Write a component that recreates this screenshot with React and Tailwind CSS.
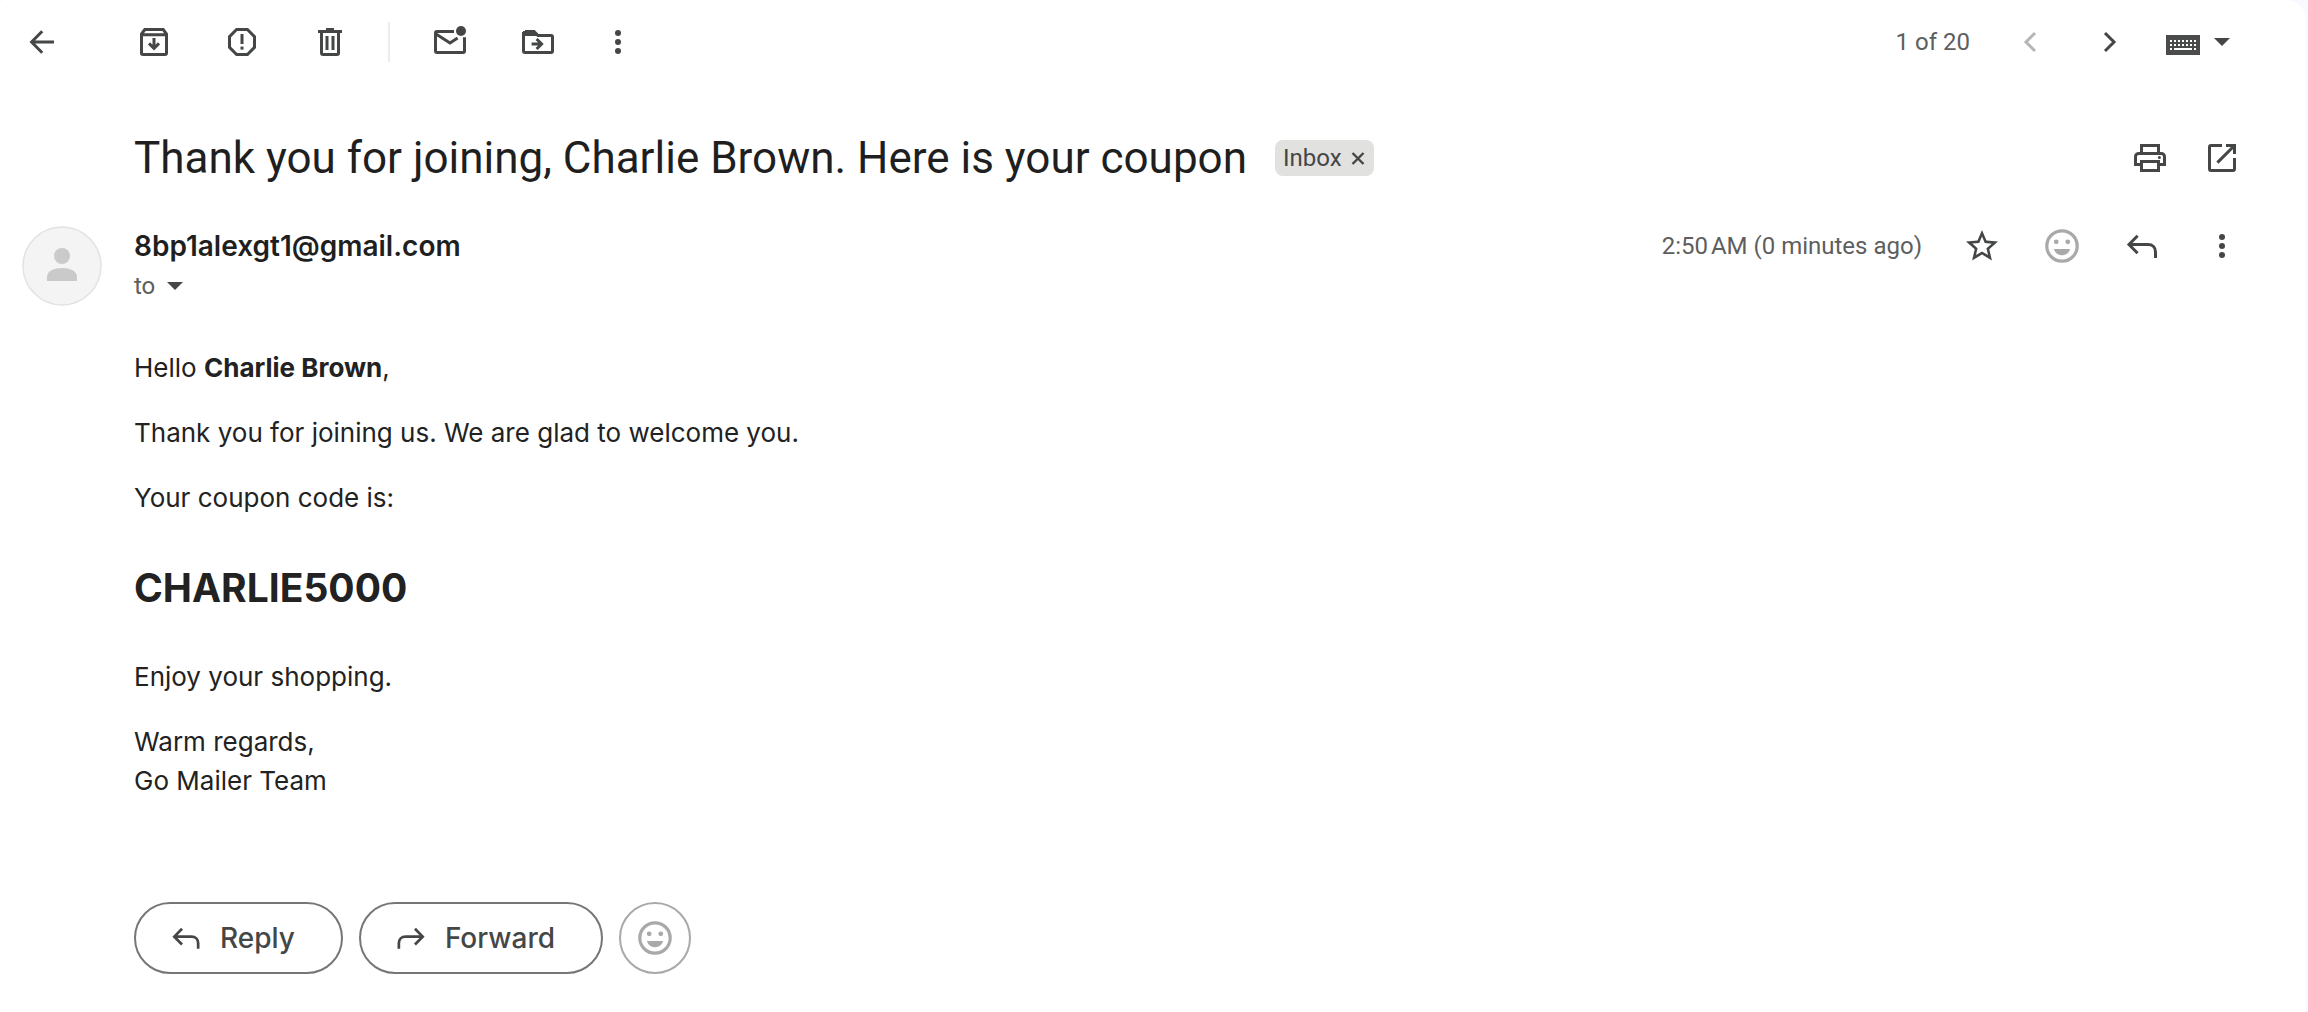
import React, { useState } from 'react';

function Icon({ children, className = 'size-10' }) {
  return (
    <svg viewBox="0 0 20 20" className={className} fill="none" stroke="currentColor" strokeWidth="1.5" aria-hidden="true">
      {children}
    </svg>
  );
}

function IconButton({ label, className = 'text-[#444746]', onClick, children }) {
  return (
    <button type="button" aria-label={label} onClick={onClick} className={`flex size-10 shrink-0 items-center justify-center rounded-full ${className}`}>
      <Icon>{children}</Icon>
    </button>
  );
}

const glyphs = {
  back: <path d="M16 10H4.9M10.1 4.6 4.8 10l5.3 5.4" />,
  archive: (
    <>
      <path d="M3.75 6 5.4 3.75h9.2L16.25 6v9.5a.75.75 0 0 1-.75.75h-11a.75.75 0 0 1-.75-.75zM3.75 6.4h12.5" />
      <path d="M10 8v5.2M7.5 10.7l2.5 2.5 2.5-2.5" />
    </>
  ),
  spam: (
    <>
      <path d="M7.3 3.75h5.4l3.55 3.55v5.4l-3.55 3.55H7.3L3.75 12.7V7.3z" />
      <path d="M10 6v5" />
      <path d="M10 12.3v1.5" />
    </>
  ),
  trash: (
    <>
      <path d="M4 4.75h12M8 3.75h4" />
      <path d="M5.75 5v10.5c0 .4.35.75.75.75h7c.4 0 .75-.35.75-.75V5M8.5 7v7M11.5 7v7" />
    </>
  ),
  unread: (
    <>
      <path d="M12 4.75H3.5a.75.75 0 0 0-.75.75v9c0 .4.35.75.75.75h13c.4 0 .75-.35.75-.75V7.6" />
      <path d="m3 6 7 4.5L13.8 8" />
      <circle cx="15.5" cy="4.5" r="2.5" fill="currentColor" stroke="none" />
    </>
  ),
  move: (
    <>
      <path d="M2.75 5v9.5c0 .4.35.75.75.75h13c.4 0 .75-.35.75-.75v-7a.75.75 0 0 0-.75-.75H10l-2-2H3.5" />
      <path d="M2.5 4.5h5.3l2 2.5H2.5z" fill="currentColor" stroke="none" />
      <path d="M6.8 11h4.8M9.3 8.5l2.5 2.5-2.5 2.5" />
    </>
  ),
  more: (
    <g fill="currentColor" stroke="none">
      <circle cx="10" cy="5.5" r="1.5" />
      <circle cx="10" cy="10" r="1.5" />
      <circle cx="10" cy="14.5" r="1.5" />
    </g>
  ),
  prev: <path d="M12.5 5.5 8 10l4.5 4.5" />,
  next: <path d="M7.5 5.5 12 10l-4.5 4.5" />,
  print: (
    <>
      <path d="M5.75 7.5V3.75h8.5V7.5M5.5 13.25H2.75V9.3c0-.9.7-1.55 1.6-1.55h11.3c.9 0 1.6.65 1.6 1.55v3.95H14.5" />
      <path d="M5.75 11.75h8.5v4.5h-8.5z" />
      <circle cx="14.7" cy="9.8" r=".75" fill="currentColor" stroke="none" />
    </>
  ),
  open: (
    <>
      <path d="M10 3.75H4.5a.75.75 0 0 0-.75.75v11c0 .4.35.75.75.75h11c.4 0 .75-.35.75-.75V10" />
      <path d="M12 3.75h4.25V8M16 4l-8.3 8.3" />
    </>
  ),
  star: (
    <path
      transform="translate(.4 .4) scale(.8)"
      fill="currentColor"
      stroke="none"
      d="M22 9.24l-7.19-.62L12 2 9.19 8.63 2 9.24l5.46 4.73L5.82 21 12 17.27 18.18 21l-1.63-7.03L22 9.24zM12 15.4l-3.76 2.27 1-4.28-3.32-2.88 4.38-.38L12 6.1l1.71 4.04 4.38.38-3.32 2.88 1 4.28L12 15.4z"
    />
  ),
  smile: (
    <>
      <circle cx="10" cy="10" r="7.6" strokeWidth="1.6" />
      <g fill="currentColor" stroke="none">
        <circle cx="7.1" cy="7.9" r="1.2" />
        <circle cx="12.9" cy="7.9" r="1.2" />
        <path d="M5.9 11.5h8.2c-.6 1.9-2.1 3.1-4.1 3.1s-3.5-1.2-4.1-3.1z" />
      </g>
    </>
  ),
  reply: <path d="M7.8 4.9 3.5 9.25l4.3 4.35M3.6 9.25H13c2.3 0 3.75 1.5 3.75 3.7V16" />,
  forward: <path d="m12.2 4.9 4.3 4.35-4.3 4.35M16.4 9.25H7c-2.3 0-3.75 1.5-3.75 3.7V16" />,
};

function Caret({ className }) {
  return (
    <svg viewBox="0 0 16 8" className={className} fill="currentColor" aria-hidden="true">
      <path d="M0 0h16L8 8z" />
    </svg>
  );
}

function Keyboard() {
  const keys = [4, 8, 12, 16, 20, 24, 28];
  return (
    <svg viewBox="0 0 34 20" className="mt-1.5 h-5 w-[34px]" aria-hidden="true">
      <path d="M0 0h34v20H0z" fill="#4a4b4b" />
      <g fill="#fff">
        {keys.map((x) => <rect key={x} x={x} y="5" width="2" height="2" />)}
        {keys.map((x) => <rect key={x} x={x} y="9" width="2" height="2" />)}
        <path d="M4 13h2v2H4zM8 13h18v2H8zM28 13h2v2h-2z" />
      </g>
    </svg>
  );
}

function Toolbar() {
  return (
    <header className="flex h-[84px] items-center justify-between pr-[76px] pl-[22px]">
      <div className="flex items-center">
        <IconButton label="Back to Inbox">{glyphs.back}</IconButton>
        <div className="ml-[72px] flex gap-12">
          <IconButton label="Archive">{glyphs.archive}</IconButton>
          <IconButton label="Report spam">{glyphs.spam}</IconButton>
          <IconButton label="Delete">{glyphs.trash}</IconButton>
        </div>
        <div className="mr-10 ml-[38px] h-10 w-0.5 bg-[#ececec]" />
        <div className="flex gap-12">
          <IconButton label="Mark as unread">{glyphs.unread}</IconButton>
          <IconButton label="Move to">{glyphs.move}</IconButton>
        </div>
        <IconButton label="More" className="ml-10 text-[#444746]">{glyphs.more}</IconButton>
      </div>
      <div className="flex items-center">
        <span className="mr-10 font-['Roboto',sans-serif] text-2xl text-[#5e5e5e]">1 of 20</span>
        <IconButton label="Newer" className="mr-10 text-[#b4b5b5]">{glyphs.prev}</IconButton>
        <IconButton label="Older">{glyphs.next}</IconButton>
        <button type="button" aria-label="Select input tool" className="ml-9 flex items-center gap-3.5 text-[#444746]">
          <Keyboard />
          <Caret className="h-2 w-4" />
        </button>
      </div>
    </header>
  );
}

function Subject() {
  const [labelled, setLabelled] = useState(true);

  return (
    <div className="mt-4 flex h-29 items-center justify-between pr-16 pl-[134px] font-['Roboto',sans-serif]">
      <div className="flex items-center gap-7">
        <h1 className="text-[44px] leading-[56px] text-[#1f1f1f]">Thank you for joining, Charlie Brown. Here is your coupon</h1>
        {labelled && (
          <span className="flex h-9 items-center gap-2 rounded-lg bg-[#e1e1e0] px-2 text-2xl text-[#444746]">
            Inbox
            <button type="button" aria-label="Remove label Inbox" onClick={() => setLabelled(false)}>
              <svg viewBox="0 0 16 16" className="size-4" fill="none" stroke="currentColor" strokeWidth="2.4" aria-hidden="true">
                <path d="m2.5 3 11 11M13.5 3l-11 11" />
              </svg>
            </button>
          </span>
        )}
      </div>
      <div className="flex gap-8">
        <IconButton label="Print all">{glyphs.print}</IconButton>
        <IconButton label="In new window">{glyphs.open}</IconButton>
      </div>
    </div>
  );
}

function Sender() {
  const [starred, setStarred] = useState(false);

  return (
    <div className="mt-2.5 flex items-start justify-between pr-16 pl-[22px]">
      <div className="flex gap-8">
        <svg viewBox="0 0 80 80" className="size-20" aria-hidden="true">
          <circle cx="40" cy="40" r="39" fill="#f4f4f4" stroke="#e2e2e2" strokeWidth="1.5" />
          <circle cx="40" cy="30" r="8" fill="#cacaca" />
          <path d="M25 55v-4c0-6 7-9 15-9s15 3 15 9v4z" fill="#cacaca" />
        </svg>
        <div>
          <h2 className="text-[28px] leading-10 font-semibold text-[#1f1f1f]">8bp1alexgt1@gmail.com</h2>
          <button type="button" className="flex h-10 items-center gap-3 font-['Roboto',sans-serif] text-2xl text-[#5e5e5e]">
            to
            <Caret className="h-2 w-4 text-[#444746]" />
          </button>
        </div>
      </div>
      <div className="flex items-center gap-10">
        <span className="font-['Roboto',sans-serif] text-2xl leading-10 text-[#5e5e5e]">2:50{'\u202f'}AM (0 minutes ago)</span>
        <IconButton label="Star" onClick={() => setStarred(!starred)} className={starred ? 'text-amber-400' : 'text-[#444746]'}>{glyphs.star}</IconButton>
        <IconButton label="Add reaction" className="text-[#a9a9a9]">{glyphs.smile}</IconButton>
        <IconButton label="Reply">{glyphs.reply}</IconButton>
        <IconButton label="More message options">{glyphs.more}</IconButton>
      </div>
    </div>
  );
}

function Message() {
  return (
    <article className="mt-[42px] flex flex-col gap-[26px] pr-16 pl-[134px] text-[26px] leading-[39px] text-[#222222]">
      <p>Hello <strong className="font-bold">Charlie Brown</strong>,</p>
      <p>Thank you for joining us. We are glad to welcome you.</p>
      <p>Your coupon code is:</p>
      <h2 className="mt-4 mb-3.5 text-[39px] leading-[58px] font-bold">CHARLIE5000</h2>
      <p>Enjoy your shopping.</p>
      <p>
        Warm regards,
        <br />
        Go Mailer Team
      </p>
    </article>
  );
}

function PillButton({ icon, children }) {
  return (
    <button type="button" className="flex h-18 items-center gap-4 rounded-full border-2 border-[#747775] pr-[46px] pl-8 text-[28px] font-medium text-[#444746]">
      <Icon className="size-9">{icon}</Icon>
      {children}
    </button>
  );
}

export default function App() {
  return (
    <div className="min-h-screen bg-[#f8faff] pr-0.5 font-['Inter',sans-serif]">
      <main className="min-h-screen rounded-tl rounded-tr-[20px] bg-white">
        <Toolbar />
        <Subject />
        <Sender />
        <Message />
        <footer className="mt-[102px] flex gap-4 pl-[134px]">
          <PillButton icon={glyphs.reply}>Reply</PillButton>
          <PillButton icon={glyphs.forward}>Forward</PillButton>
          <button type="button" aria-label="Add emoji reaction" className="flex size-18 items-center justify-center rounded-full border-2 border-[#a9a9a9] text-[#a9a9a9]">
            <Icon>{glyphs.smile}</Icon>
          </button>
        </footer>
      </main>
    </div>
  );
}
